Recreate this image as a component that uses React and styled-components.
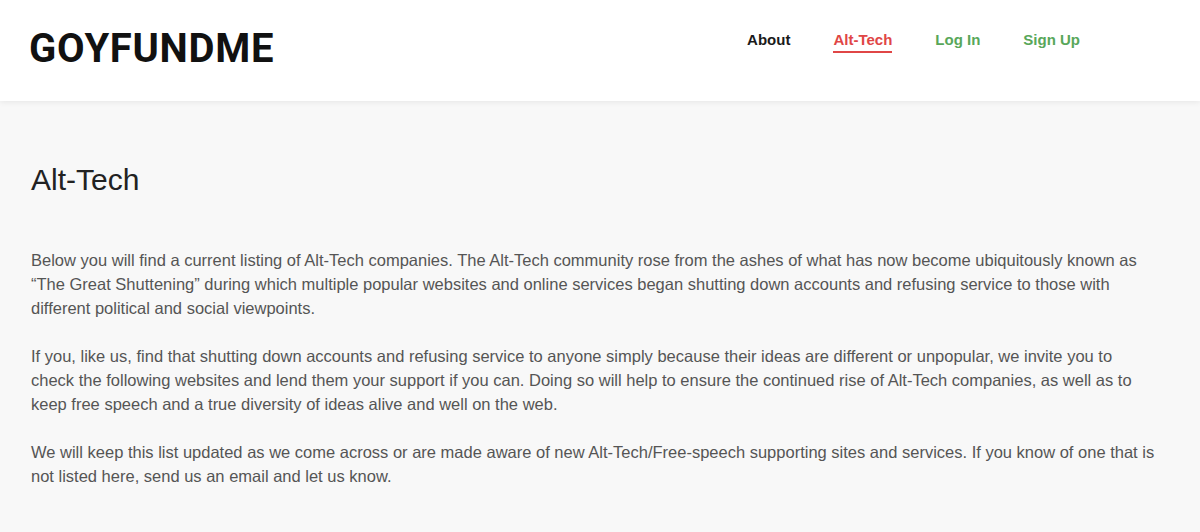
import React from 'react'
import styled, { createGlobalStyle } from 'styled-components'

const GlobalStyle = createGlobalStyle`
  html, body {
    margin: 0;
    padding: 0;
    background: #f8f8f8;
  }
  body {
    font-family: "Liberation Sans", Arial, sans-serif;
  }
`

const Header = styled.header`
  height: 101px;
  background: #fff;
  box-shadow: 0 1px 6px rgba(0, 0, 0, 0.08);
  display: flex;
  align-items: flex-start;
  justify-content: space-between;
  padding: 0 120px 0 29px;
  position: relative;
`

const Logo = styled.div`
  font-family: Roboto, "Liberation Sans", sans-serif;
  font-weight: 700;
  font-size: 40px;
  color: #111;
  margin-top: 25px;
  letter-spacing: 0.7px;
`

const Nav = styled.nav`
  display: flex;
  gap: 43px;
  margin-top: 31px;
`

const NavLink = styled.a`
  font-size: 15px;
  font-weight: 700;
  text-decoration: none;
  color: ${p => p.$color};
  padding-bottom: 3px;
  border-bottom: 2px solid ${p => (p.$active ? p.$color : 'transparent')};
  height: 17px;
`

const Main = styled.main`
  padding: 62px 30px 40px 31px;
`

const Title = styled.h1`
  margin: 0 0 51px;
  font-size: 30px;
  font-weight: 400;
  color: #222;
  line-height: 34px;
`

const Paragraph = styled.p`
  margin: 0 0 24px;
  font-size: 16.5px;
  line-height: 24px;
  color: #555;
  max-width: 1126px;
`

export default function App() {
  return (
    <>
      <GlobalStyle />
      <Header>
        <Logo>GOYFUNDME</Logo>
        <Nav>
          <NavLink href="#" $color="#1a1a1a">About</NavLink>
          <NavLink href="#" $color="#e04646" $active>Alt-Tech</NavLink>
          <NavLink href="#" $color="#58a75a">Log In</NavLink>
          <NavLink href="#" $color="#58a75a">Sign Up</NavLink>
        </Nav>
      </Header>
      <Main>
        <Title>Alt-Tech</Title>
        <Paragraph>
          Below you will find a current listing of Alt-Tech companies. The Alt-Tech community rose from the ashes of what has now become ubiquitously known as “The Great Shuttening” during which multiple popular websites and online services began shutting down accounts and refusing service to those with different political and social viewpoints.
        </Paragraph>
        <Paragraph>
          If you, like us, find that shutting down accounts and refusing service to anyone simply because their ideas are different or unpopular, we invite you to check the following websites and lend them your support if you can. Doing so will help to ensure the continued rise of Alt-Tech companies, as well as to keep free speech and a true diversity of ideas alive and well on the web.
        </Paragraph>
        <Paragraph>
          We will keep this list updated as we come across or are made aware of new Alt-Tech/Free-speech supporting sites and services. If you know of one that is not listed here, send us an email and let us know.
        </Paragraph>
      </Main>
    </>
  )
}
